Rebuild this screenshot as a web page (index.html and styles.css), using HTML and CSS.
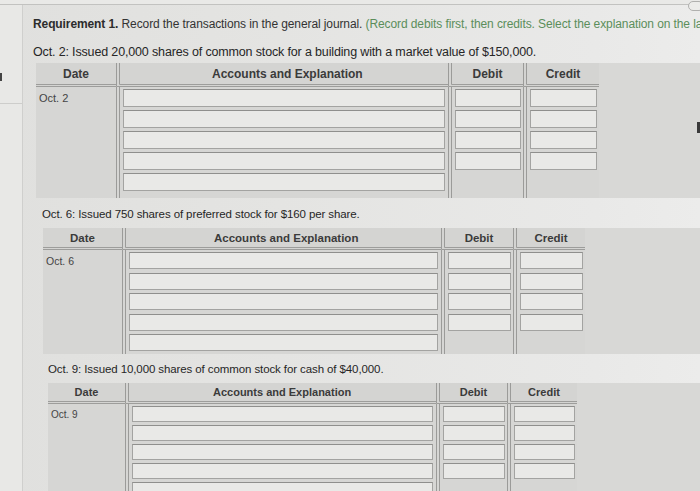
FILE: index.html
```html
<!DOCTYPE html>
<html>
<head>
<meta charset="utf-8">
<link rel="stylesheet" href="styles.css">
</head>
<body>
<div class="screen">
  <div class="topbar"></div>
  <div class="corner-btn"></div>
  <div class="edge-mark"></div>
  <div class="main">
    <div class="rail"><div class="rail-mark"></div><div class="rail-line"></div></div>
    <div class="content">
      <div class="req-clip">
        <div class="req"><b>Requirement 1.</b> Record the transactions in the general journal. <span class="hint">(Record debits first, then credits. Select the explanation on the last line of the journal entry table.)</span></div>
      </div>

      <p class="txn t1">Oct. 2: Issued 20,000 shares of common stock for a building with a market value of $150,000.</p>
      <div class="journal j1">
        <div class="hc date">Date</div>
        <div class="hc acct">Accounts and Explanation</div>
        <div class="hc debit">Debit</div>
        <div class="hc credit">Credit</div>
        <div class="bc date"><span class="dt">Oct. 2</span></div>
        <div class="bc acct"><div class="in"></div><div class="in"></div><div class="in"></div><div class="in"></div><div class="in"></div></div>
        <div class="bc debit"><div class="in"></div><div class="in"></div><div class="in"></div><div class="in"></div></div>
        <div class="bc credit"><div class="in"></div><div class="in"></div><div class="in"></div><div class="in"></div></div>
      </div>

      <p class="txn t2">Oct. 6: Issued 750 shares of preferred stock for $160 per share.</p>
      <div class="journal j2">
        <div class="hc date">Date</div>
        <div class="hc acct">Accounts and Explanation</div>
        <div class="hc debit">Debit</div>
        <div class="hc credit">Credit</div>
        <div class="bc date"><span class="dt">Oct. 6</span></div>
        <div class="bc acct"><div class="in"></div><div class="in"></div><div class="in"></div><div class="in"></div><div class="in"></div></div>
        <div class="bc debit"><div class="in"></div><div class="in"></div><div class="in"></div><div class="in"></div></div>
        <div class="bc credit"><div class="in"></div><div class="in"></div><div class="in"></div><div class="in"></div></div>
      </div>

      <p class="txn t3">Oct. 9: Issued 10,000 shares of common stock for cash of $40,000.</p>
      <div class="journal j3">
        <div class="hc date">Date</div>
        <div class="hc acct">Accounts and Explanation</div>
        <div class="hc debit">Debit</div>
        <div class="hc credit">Credit</div>
        <div class="bc date"><span class="dt">Oct. 9</span></div>
        <div class="bc acct"><div class="in"></div><div class="in"></div><div class="in"></div><div class="in"></div><div class="in"></div></div>
        <div class="bc debit"><div class="in"></div><div class="in"></div><div class="in"></div><div class="in"></div></div>
        <div class="bc credit"><div class="in"></div><div class="in"></div><div class="in"></div><div class="in"></div></div>
      </div>
    </div>
  </div>
</div>
</body>
</html>
```

FILE: styles.css
```css
html, body {
  margin: 0;
  padding: 0;
}
body {
  font-family: "Liberation Sans", Arial, sans-serif;
  color: #262626;
}
.screen {
  width: 700px;
  height: 491px;
  overflow: hidden;
  position: relative;
  background: linear-gradient(90deg, #e0e0de 0%, #e4e4e2 40%, #e9e9e8 85%, #ececeb 100%);
}
.topbar {
  height: 4px;
  border-bottom: 1px solid #c2c2c0;
  background: #e9e9e7;
}
.corner-btn {
  position: absolute;
  right: -4px;
  top: 1px;
  width: 14px;
  height: 8px;
  border: 1px solid #b0b0ae;
  border-radius: 5px;
  background: #ececea;
}
.edge-mark {
  position: absolute;
  right: 0;
  top: 122px;
  width: 3px;
  height: 11px;
  background: #3a3a3a;
}
.main {
  display: flex;
  height: 486px;
}
.rail {
  width: 22px;
  flex: none;
  border-right: 1px solid #cfcfcd;
  background: #e8e8e6;
  position: relative;
}
.rail-mark {
  position: absolute;
  left: 0;
  top: 68px;
  width: 2px;
  height: 8px;
  background: #444;
}
.rail-line {
  position: absolute;
  left: 0;
  right: 0;
  top: 98px;
  border-top: 1px solid #cdcdcb;
}
.content {
  flex: 1;
  padding-left: 10px;
  min-width: 0;
}
.req-clip {
  margin-top: 14px;
  height: 13px;
  overflow: hidden;
  white-space: nowrap;
}
.req {
  font-size: 12px;
  line-height: 14px;
  margin-top: -2px;
  color: #333;
  letter-spacing: -0.1px;
}
.req b {
  color: #2c2c2c;
}
.hint {
  color: #5b8e5b;
}
.txn {
  margin: 0;
  white-space: nowrap;
}
.t1 {
  font-size: 12.5px;
  line-height: 15px;
  margin-top: 13px;
  letter-spacing: -0.15px;
}
.t2 {
  font-size: 11.5px;
  line-height: 14px;
  margin-top: 9px;
  margin-left: 9px;
  letter-spacing: -0.1px;
}
.t3 {
  font-size: 11.5px;
  line-height: 14px;
  margin-top: 8px;
  margin-left: 15px;
  letter-spacing: -0.1px;
}

/* journal tables */
.journal {
  display: grid;
  background: #d8d8d6;
}
.j1 {
  grid-template-columns: 80px 332px 75px 76px;
  grid-template-rows: 24px 111px;
  margin-top: 3px;
  margin-left: 3px;
  --row: 21px;
  --inh: 18px;
  --fs: 12px;
}
.j2 {
  grid-template-columns: 79px 319px 72px 72px;
  grid-template-rows: 22px 104px;
  margin-top: 7px;
  margin-left: 10px;
  --row: 20.5px;
  --inh: 17px;
  --fs: 11.5px;
}
.j3 {
  grid-template-columns: 77px 311px 71px 70px;
  grid-template-rows: 21px 110px;
  margin-top: 7px;
  margin-left: 15px;
  --row: 19px;
  --inh: 16px;
  --fs: 11px;
}
.hc {
  background: #d4d4d2;
  border-bottom: 3px double #9d9d9b;
  font-weight: bold;
  font-size: var(--fs);
  color: #3b3b3b;
  display: flex;
  align-items: center;
  justify-content: center;
}
.hc.acct,
.hc.debit,
.hc.credit,
.bc.acct,
.bc.debit,
.bc.credit {
  border-left: 4px double #9b9b99;
}
.hc.acct {
  justify-content: flex-start;
  padding-left: 92px;
}
.j2 .hc.acct {
  padding-left: 88px;
}
.j3 .hc.acct {
  padding-left: 84px;
}
.bc {
  background: #d6d6d4;
  display: flex;
  flex-direction: column;
  padding: 2px 2px 0 3px;
  gap: calc(var(--row) - var(--inh));
}
.bc.date {
  padding: 5px 0 0 3px;
}
.dt {
  font-size: calc(var(--fs) - 1px);
  color: #444;
}
.in {
  height: var(--inh);
  flex: none;
  box-sizing: border-box;
  border: 1px solid #a3a3a1;
  border-top-color: #8f8f8d;
  background: #e9e9e7;
}
.bc.acct .in {
  margin-right: 1px;
}
```
